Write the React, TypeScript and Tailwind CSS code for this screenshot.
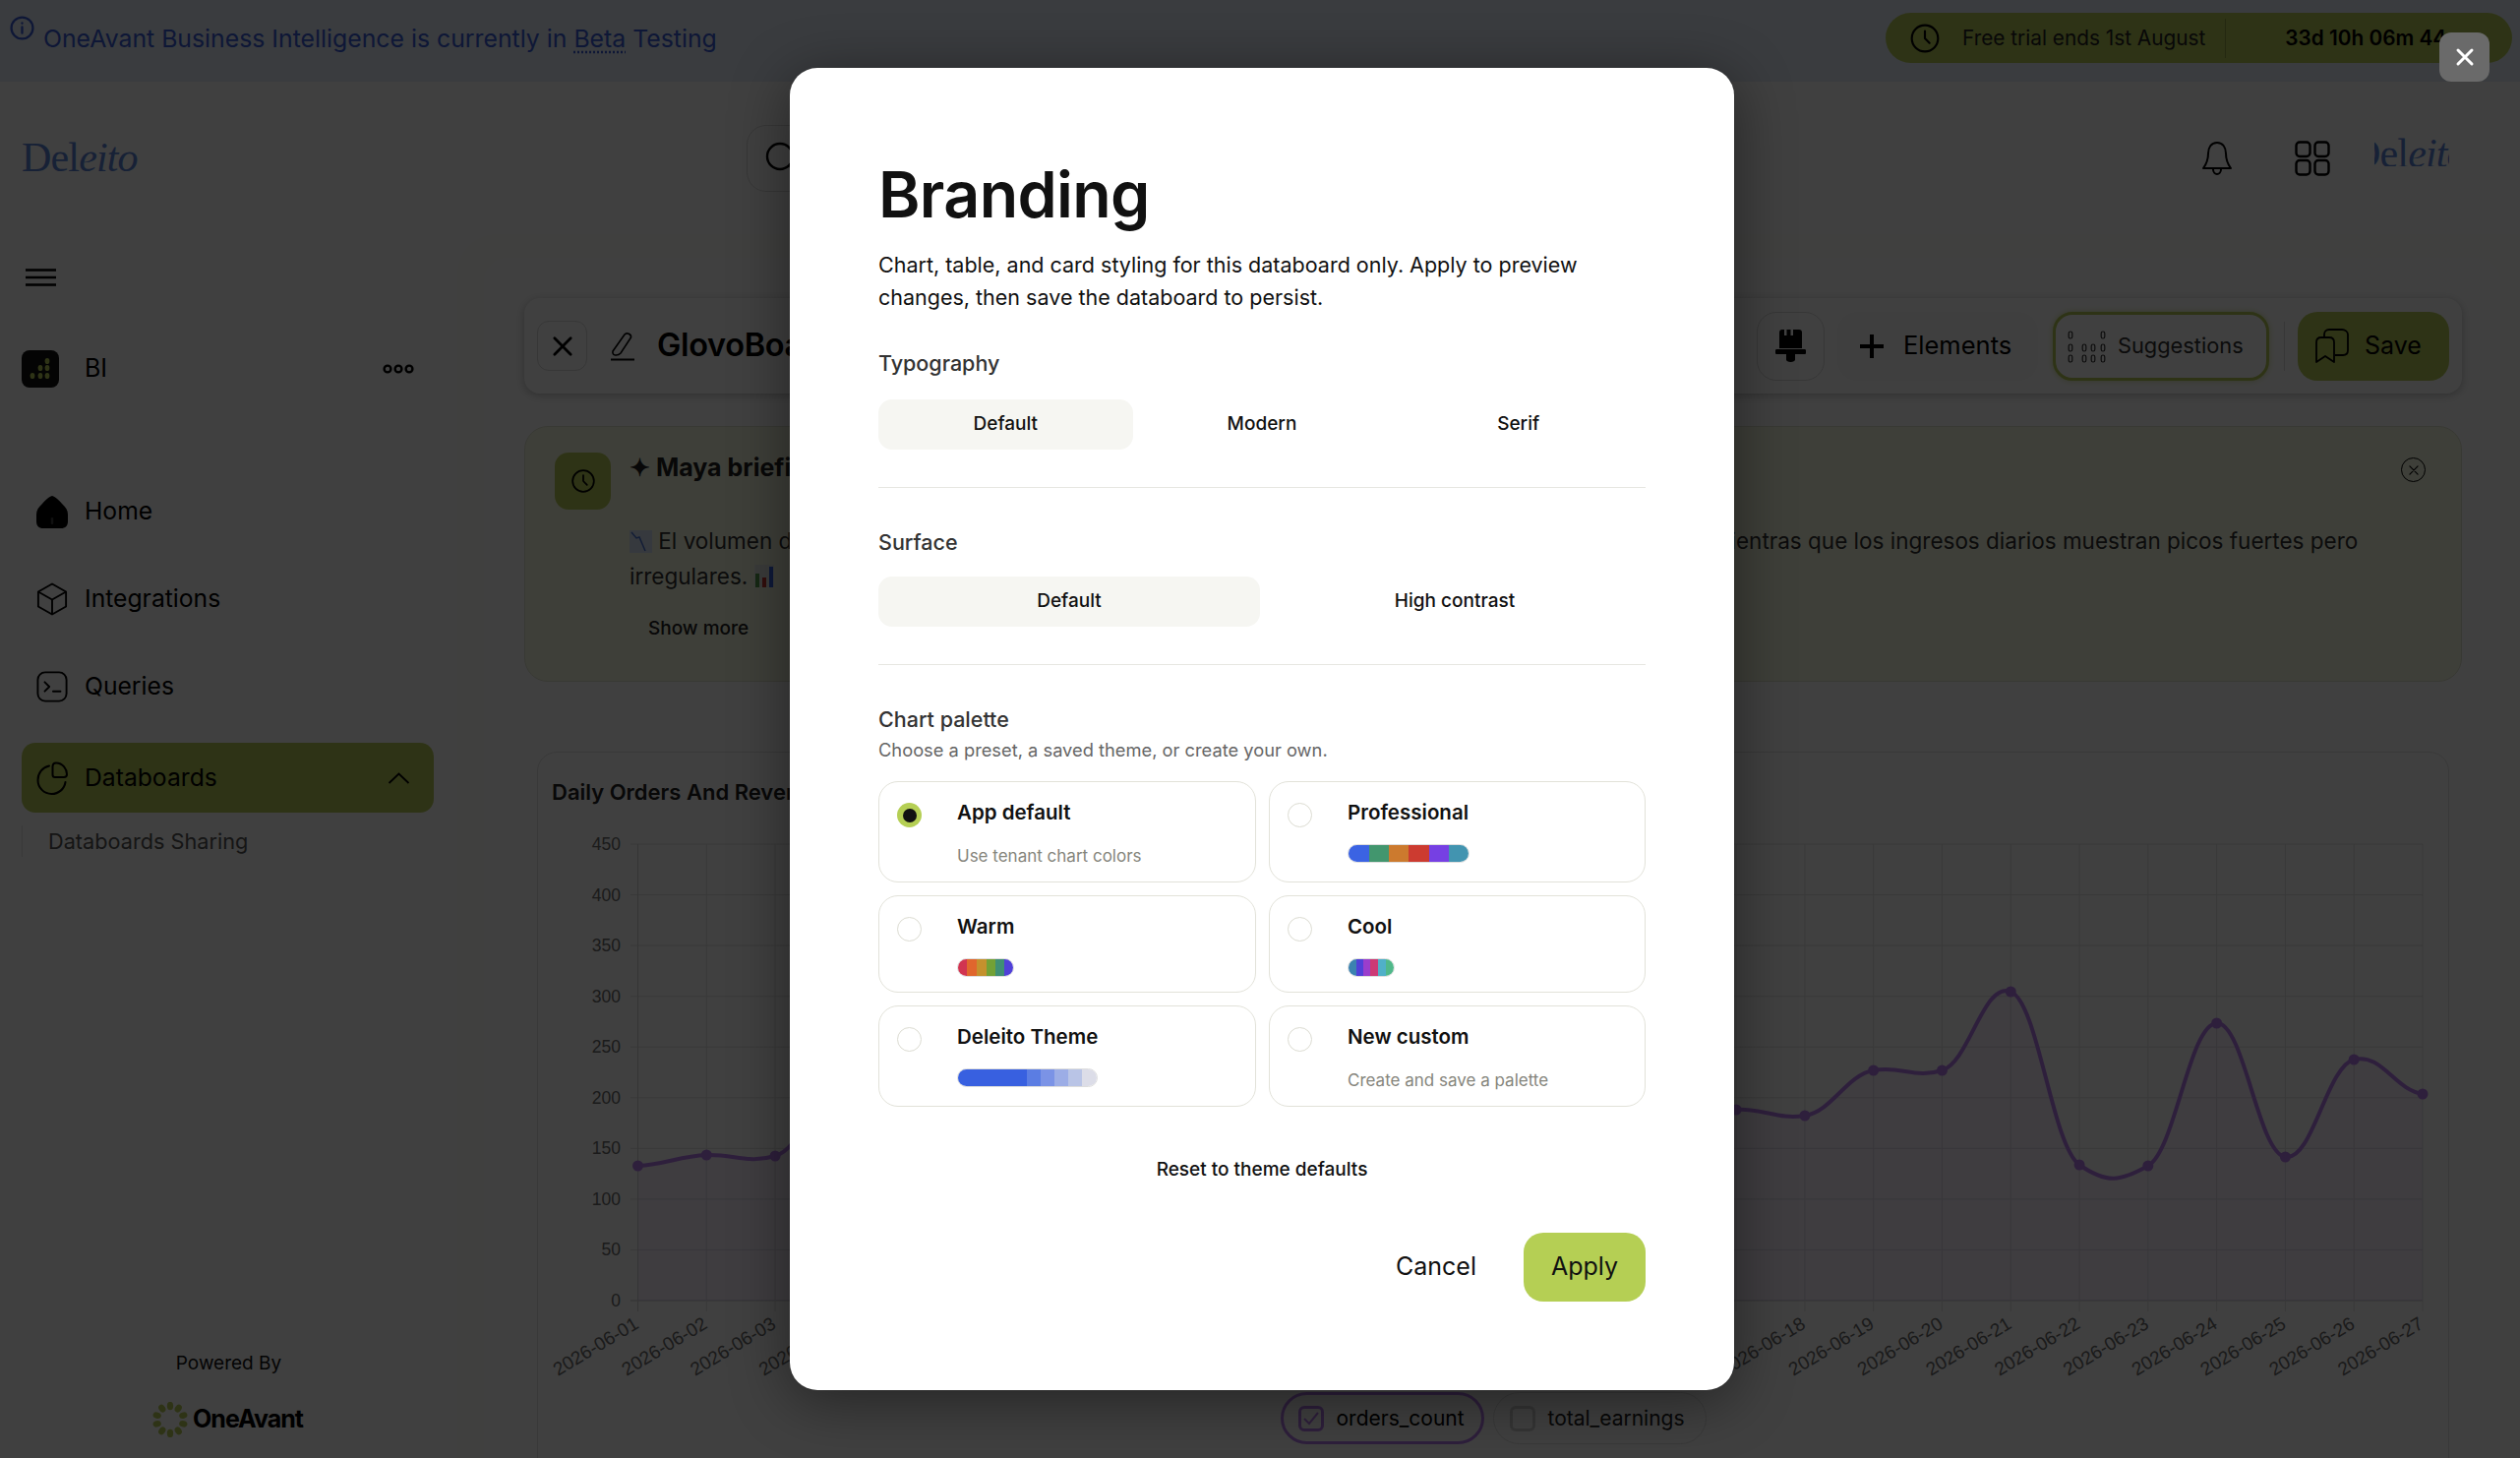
import React from "react";

const YS = [1185,1174,1175,1100,1120,1150,1130,1090,1140,1110,1160,1120,1095,1140,1125,1150,1128,1134,1088,1088,1008,1184,1185,1040,1176,1077,1112];
const X0 = 647.5;
const DX = (2462 - 647.5) / 26;
const pts = YS.map((y, i) => [X0 + i * DX, y] as const);

function smooth(): string {
  const t = 0.11;
  let d = `M${pts[0][0]} ${pts[0][1]}`;
  for (let i = 0; i < pts.length - 1; i++) {
    const p0 = pts[Math.max(0, i - 1)];
    const p1 = pts[i];
    const p2 = pts[i + 1];
    const p3 = pts[Math.min(pts.length - 1, i + 2)];
    const c1x = p1[0] + DX * 0.4;
    const c1y = p1[1] + (p2[1] - p0[1]) * t;
    const c2x = p2[0] - DX * 0.4;
    const c2y = p2[1] - (p3[1] - p1[1]) * t;
    d += ` C${c1x} ${c1y} ${c2x} ${c2y} ${p2[0]} ${p2[1]}`;
  }
  return d;
}

function Chart() {
  const line = smooth();
  const yTicks = [450, 400, 350, 300, 250, 200, 150, 100, 50, 0];
  return (
    <svg width="1944" height="570" viewBox="546 840 1944 570" className="block [font-family:'Liberation_Sans',sans-serif]">
      {yTicks.map((v, i) => {
        const y = 858 + (i * 464) / 9;
        return (
          <g key={v}>
            <line x1={640} x2={2462} y1={y} y2={y} stroke="#e2e2e2" strokeWidth={v === 0 ? 2 : 1} />
            <text x={630} y={y + 6} fontSize="17.5" textAnchor="end" fill="#6b6b6b">{v}</text>
          </g>
        );
      })}
      {pts.map((p, i) => (
        <g key={i}>
          <line x1={p[0]} x2={p[0]} y1={858} y2={1333} stroke={i === 0 ? "#d4d4d4" : "#e2e2e2"} strokeWidth={1} />
          <text transform={`translate(${p[0] + 2} 1349) rotate(-31)`} fontSize="19" textAnchor="end" fill="#6b6b6b">
            {`2026-06-${String(i + 1).padStart(2, "0")}`}
          </text>
        </g>
      ))}
      <path d={`${line} L2462 1322 L647.5 1322 Z`} fill="#c084fc" fillOpacity="0.1" />
      <path d={line} fill="none" stroke="#b87cf0" strokeWidth="4" />
      {pts.map((p, i) => <circle key={i} cx={p[0]} cy={p[1]} r="5.5" fill="#b87cf0" />)}
    </svg>
  );
}

function Logo({ className }: { className: string }) {
  return (
    <span className={`[font-family:'Liberation_Serif',serif] text-[#5b84d8] whitespace-nowrap tracking-[-0.02em] ${className}`}>
      Del<span className="italic">eito</span>
    </span>
  );
}

function Stroke({ size, children, w = 2, className = "" }: { size: number; children: React.ReactNode; w?: number; className?: string }) {
  return (
    <svg width={size} height={size} viewBox="0 0 24 24" fill="none" stroke="currentColor" strokeWidth={w} strokeLinecap="round" strokeLinejoin="round" className={`shrink-0 ${className}`}>
      {children}
    </svg>
  );
}

function Clock({ size }: { size: number }) {
  return (
    <Stroke size={size} w={1.6}>
      <circle cx="12" cy="12" r="10" />
      <path d="M12 6.5V12l3.5 3.5" />
    </Stroke>
  );
}

function XIcon({ size, w = 2.4 }: { size: number; w?: number }) {
  return <Stroke size={size} w={w}><path d="M5 5l14 14M19 5L5 19" /></Stroke>;
}

function NavItem({ icon, label }: { icon: React.ReactNode; label: string }) {
  return (
    <div className="h-[34px] flex items-center pl-[37px] gap-[17px] text-[24.700px] text-black">
      <span className="w-[32px] flex justify-center">{icon}</span>
      <span>{label}</span>
    </div>
  );
}

function BiIcon() {
  const dots = [[26, 11], [26, 18], [26, 26], [19, 18], [19, 26], [11, 26]];
  return (
    <svg width="38" height="38" viewBox="0 0 38 38">
      <rect width="38" height="38" rx="8" fill="#111" />
      {dots.map(([x, y], i) => <ellipse key={i} cx={x} cy={y} rx="2.400" ry="3.100" fill="#b8cc58" />)}
    </svg>
  );
}

function OneAvantMark() {
  const a = [0, 36, 72, 108, 144, 180, 216, 252, 288, 324];
  return (
    <svg width="36" height="36" viewBox="-18 -18 36 36">
      {a.map((d) => <ellipse key={d} cx="0" cy="-14" rx="3.200" ry="4.200" fill="#b8cc58" transform={`rotate(${d})`} />)}
    </svg>
  );
}

function Sidebar() {
  return (
    <aside className="w-[465px] shrink-0 flex flex-col pt-[35px] relative">
      <div className="pl-[26px] h-[18px]">
        <svg width="31" height="18" viewBox="0 0 31 18"><path d="M0 1.500h31M0 9h31M0 16.500h31" stroke="#000" strokeWidth="2.500" /></svg>
      </div>
      <div className="mt-[65px] pl-[22px] pr-[44px] flex items-center h-[38px]">
        <BiIcon />
        <span className="ml-[26px] text-[25px]">BI</span>
        <svg className="ml-auto" width="32" height="12" viewBox="0 0 32 12" fill="none" stroke="#000" strokeWidth="2.400">
          <circle cx="5" cy="6" r="3.400" /><circle cx="16" cy="6" r="3.400" /><circle cx="27" cy="6" r="3.400" />
        </svg>
      </div>
      <div className="mt-[109px] flex flex-col gap-[55px]">
        <NavItem label="Home" icon={
          <svg width="32" height="33" viewBox="0 0 32 33"><path d="M16 0C13 .8 10 3.500 6 8 2 12 0 14.500 0 19v7c0 4.500 2.500 7 7 7h18c4.500 0 7-2.500 7-7v-7c0-4.500-2-7-6-11C22 3.500 19 .8 16 0z" fill="#000" /><rect x="14.700" y="22" width="2.600" height="7" rx="1.300" fill="#404040" /></svg>
        } />
        <NavItem label="Integrations" icon={
          <svg width="34" height="36" viewBox="0 0 34 36" fill="none" stroke="#000" strokeWidth="2" strokeLinejoin="round"><path d="M17 1.500l15 8.500v16l-15 8.500L2 26V10z" /><path d="M2 10l15 8.500L32 10M17 18.500v16" /></svg>
        } />
        <NavItem label="Queries" icon={
          <svg width="34" height="34" viewBox="0 0 34 34" fill="none" stroke="#000" strokeWidth="2" strokeLinecap="round" strokeLinejoin="round"><rect x="1.500" y="1.500" width="31" height="31" rx="8" /><path d="M9 12l5 5-5 5M18 22h8" /></svg>
        } />
      </div>
      <div className="mt-[40px] mx-[22px] w-[419px] h-[71px] rounded-[14px] bg-[#b8cc58] flex items-center pl-[15px] pr-[24px]">
        <svg width="33" height="34" viewBox="0 0 33 34" fill="none" stroke="#000" strokeWidth="2" strokeLinecap="round" strokeLinejoin="round"><path d="M13 4.500C6 6 1.500 12 1.500 19a14 14 0 0 0 14 14c7 0 13-5 14-12" /><path d="M20 1.500c-3 0-3.500 2-3.500 4v8c0 1.500 1 2.500 2.500 2.500h9c1.500 0 3-1 3-3C31 8 27 1.500 20 1.500z" /></svg>
        <span className="ml-[16px] text-[24.700px]">Databoards</span>
        <svg className="ml-auto" width="23" height="12" viewBox="0 0 23 12" fill="none" stroke="#000" strokeWidth="1.800"><path d="M1.500 11L11.500 1.500 21.500 11" /></svg>
      </div>
      <div className="mt-[13px] ml-[22px] h-[32px] border-l border-[#e4e4e4] pl-[26px] flex items-center text-[21.700px] text-[#555]">Databoards Sharing</div>
      <div className="mt-auto pb-[21px] flex flex-col items-center">
        <span className="text-[19px] text-[#111]">Powered By</span>
        <div className="mt-[25px] flex items-center gap-[5px] h-[36px] -ml-[2px]">
          <OneAvantMark />
          <span className="text-[25px] font-bold tracking-[-0.04em]">OneAvant</span>
        </div>
      </div>
    </aside>
  );
}

function DotsIcon() {
  const cols = [4, 18, 27, 37];
  const rows = [9, 22, 33];
  return (
    <svg width="40" height="42" viewBox="0 0 40 42" fill="none" stroke="#333" strokeWidth="1.200" className="shrink-0">
      {rows.map((y, r) => cols.map((x, c) => (r === 0 && (c === 1 || c === 2)) ? null : <rect key={`${r}${c}`} x={x - 1.800} y={y - 3} width="3.600" height="7" rx="1.800" />))}
    </svg>
  );
}

function Main() {
  return (
    <main className="flex-1 min-w-0 rounded-tl-[40px] bg-[#fdfdfa] pl-[27px] pt-[24px] pr-[20px]">
      <div className="h-[1300px] rounded-t-[24px] bg-white pl-[41px] pr-[39px] pt-[41px] flex flex-col">
        <div className="h-[97px] shrink-0 rounded-[16px] bg-white shadow-[0_2px_10px_rgba(0,0,0,0.25)] flex items-center pl-[13px] pr-[13px]">
          <span className="w-[51px] h-[51px] rounded-[12px] border border-[#d9d9d9] flex items-center justify-center"><XIcon size={28} /></span>
          <svg className="ml-[23px]" width="26" height="30" viewBox="0 0 26 30" fill="none" stroke="#000" strokeWidth="1.600">
            <path d="M3 20L15 3c2-2.500 7-.5 6.500 3L11 22c-3 3-9 3-8-2z" /><path d="M1 28.500h24" strokeWidth="2" />
          </svg>
          <span className="ml-[22px] text-[32.500px] font-semibold tracking-[-0.01em]">GlovoBoard</span>
          <div className="ml-auto flex items-center h-[70px]">
            <span className="w-[69px] h-[70px] rounded-[20px] border border-[#d9d9d9] flex items-center justify-center">
              <svg width="31" height="33" viewBox="0 0 31 33"><path d="M4 3c0-2 1-3 3-3h2v6h2.500V0h4v6H18V0h6c2 0 3 1 3 3v16H4zM1.500 20h28c1 0 1.500.5 1.500 1.500v2c0 1-.5 1.500-1.500 1.500H20v5.500c0 1.500-2 2.500-4.500 2.500S11 32 11 30.500V25H1.500C.5 25 0 24.500 0 23.500v-2C0 20.500.5 20 1.500 20z" fill="#000" /></svg>
            </span>
            <span className="ml-[13px] w-[204px] h-[70px] rounded-[20px] bg-[#fbfbfb] flex items-center pl-[23px] gap-[20px] text-[25.500px]">
              <svg width="24" height="36" viewBox="0 0 24 36"><path d="M12 6v24M0 18h24" stroke="#000" strokeWidth="4" /></svg>
              Elements
            </span>
            <span className="ml-[15px] w-[220px] h-[70px] rounded-[20px] border-[3px] border-[#b8cc58] bg-white flex items-center pl-[11px] gap-[12px] text-[21.800px] text-[#333] shadow-[0_0_6px_rgba(184,204,88,0.6)]">
              <DotsIcon />
              Suggestions
            </span>
            <span className="ml-[15px] w-px h-[50px] bg-[#dcdcdc]" />
            <span className="ml-[13px] w-[154px] h-[70px] rounded-[20px] bg-[#b8cc58] flex items-center pl-[17px] gap-[16px] text-[25px]">
              <svg width="35" height="36" viewBox="0 0 35 36" fill="none" stroke="#000" strokeWidth="1.800" strokeLinejoin="round"><path d="M2 14c0-3 2-5 5-5h8c3 0 5 2 5 5v20l-9-6-9 6z" /><path d="M10 9V6c0-3 2-5 5-5h13c3 0 6 2 6 5v16c0 3-2 5-5 5h-8" /></svg>
              Save
            </span>
          </div>
        </div>
        <div className="relative mt-[33px] h-[260px] shrink-0 rounded-[24px] bg-[#f8fce4] border border-[#dfe2cd] pl-[30px] pt-[26px]">
          <div className="flex">
            <span className="w-[57px] h-[58px] rounded-[14px] bg-[#b8cc58] flex items-center justify-center"><Clock size={26} /></span>
            <div className="ml-[19px] flex-1 min-w-0 pr-[30px]">
              <div className="text-[25px] font-bold text-[#222] -mt-[3px]">✦ Maya briefing</div>
              <div className="mt-[37px] text-[22.500px] leading-[36px] text-[#333] w-[1775px]">
                <svg className="inline-block align-[-4px]" width="23" height="23" viewBox="0 0 23 23"><rect width="23" height="23" fill="#d8e2f5" /><path d="M2 2l5 6 3-1 6 14" fill="none" stroke="#4a74d8" strokeWidth="1.500" /></svg>
                {" "}El volumen de pedidos se mantiene relativamente estable durante la mayor parte de todo el periodo, mientras que los ingresos diarios muestran picos fuertes pero irregulares.{" "}
                <svg className="inline-block align-[-3px]" width="20" height="23" viewBox="0 0 20 23"><rect width="20" height="23" fill="#e6ebe6" /><rect x="1" y="9" width="4" height="14" fill="#5aa050" /><rect x="8" y="13" width="4" height="10" fill="#c83a30" /><rect x="15" y="2" width="4" height="21" fill="#3b63e3" /></svg>
              </div>
              <div className="mt-[21px] ml-[19px] text-[19px] font-medium text-[#222]">Show more</div>
            </div>
          </div>
          <span className="absolute right-[36px] top-[31px]"><span className="w-[25px] h-[25px] rounded-full border-[1.500px] border-black flex items-center justify-center"><XIcon size={14} w={2} /></span></span>
        </div>
        <div className="mt-[71px] mx-[13px] flex-1 rounded-t-[20px] border border-[#e2e2e2] flex flex-col pt-[24px]">
          <div className="pl-[14px] text-[22px] leading-[32px] font-semibold text-[#222] h-[32px]">Daily Orders And Revenue</div>
          <div className="mt-[19px]"><Chart /></div>
          <div className="mt-[5px] flex justify-center gap-[9px]">
            <span className="w-[207px] h-[53px] rounded-full border-[3px] border-[#b87cf0] flex items-center pl-[15px] gap-[13px] text-[21px]">
              <span className="w-[26px] h-[26px] rounded-[6px] border-[3px] border-[#b87cf0] flex items-center justify-center">
                <svg width="16" height="14" viewBox="0 0 16 14" fill="none" stroke="#b87cf0" strokeWidth="2"><path d="M1 7l5 5 9-11" /></svg>
              </span>
              orders_count
            </span>
            <span className="w-[217px] h-[53px] rounded-full border border-[#e2e2e2] flex items-center pl-[16px] gap-[13px] text-[21px] text-[#222]">
              <span className="w-[26px] h-[26px] rounded-[6px] border-[3px] border-[#d4d4d4]" />
              total_earnings
            </span>
          </div>
        </div>
      </div>
    </main>
  );
}

function Seg({ active, children }: { active?: boolean; children: string }) {
  return (
    <div className={`h-[51px] rounded-[14px] flex items-center justify-center text-[19px] font-medium text-[#111] ${active ? "bg-[#f6f6f2]" : ""}`}>{children}</div>
  );
}

function Stripe({ colors, widths }: { colors: string[]; widths: number[] }) {
  return (
    <div className="flex h-[19px] w-fit rounded-full overflow-hidden border border-[#ddd]">
      {colors.map((c, i) => <span key={c} className="block h-full" style={{ background: c, width: widths[i] }} />)}
    </div>
  );
}

function PaletteCard({ title, sub, stripe, selected, h }: { title: string; sub?: string; stripe?: React.ReactNode; selected?: boolean; h: string }) {
  return (
    <div className={`${h} rounded-[20px] border-[1.500px] border-[#e2e2d9] flex pl-[18px] pt-[21px]`}>
      {selected ? (
        <span className="w-[25px] h-[25px] rounded-full bg-[#b5cf54] flex items-center justify-center shrink-0"><span className="w-[14px] h-[14px] rounded-full bg-[#111]" /></span>
      ) : (
        <span className="w-[25px] h-[25px] rounded-full border border-[#dcdcd2] shrink-0" />
      )}
      <div className="ml-[36px] -mt-[4px]">
        <div className="text-[20.500px] leading-[28px] font-semibold text-[#111]">{title}</div>
        {sub && <div className="mt-[18px] text-[17px] leading-[24px] text-[#85857c]">{sub}</div>}
        {stripe && <div className="mt-[18px]">{stripe}</div>}
      </div>
    </div>
  );
}

function Modal() {
  return (
    <div className="w-[960px] h-[1344px] rounded-[28px] bg-white shadow-[0_10px_60px_rgba(0,0,0,0.45)] px-[90px] pt-[94px]">
      <h1 className="text-[64.500px] leading-[70px] font-semibold text-[#111] tracking-[-0.01em]">Branding</h1>
      <p className="mt-[20px] text-[21.500px] leading-[32.600px] text-[#111]">Chart, table, and card styling for this databoard only. Apply to preview changes, then save the databoard to persist.</p>
      <div className="mt-[36px] text-[21.500px] leading-[30px] font-medium text-[#333]">Typography</div>
      <div className="mt-[22px] grid grid-cols-3 gap-[2px]">
        <Seg active>Default</Seg><Seg>Modern</Seg><Seg>Serif</Seg>
      </div>
      <div className="mt-[38px] h-px bg-[#e6e6e1]" />
      <div className="mt-[40px] text-[21.500px] leading-[30px] font-medium text-[#333]">Surface</div>
      <div className="mt-[20px] grid grid-cols-2 gap-[4px]">
        <Seg active>Default</Seg><Seg>High contrast</Seg>
      </div>
      <div className="mt-[38px] h-px bg-[#e6e6e1]" />
      <div className="mt-[40px] text-[21.500px] leading-[30px] font-medium text-[#333]">Chart palette</div>
      <div className="mt-[3px] text-[18.300px] leading-[26px] text-[#666]">Choose a preset, a saved theme, or create your own.</div>
      <div className="mt-[19px] grid grid-cols-[384px_383px] gap-[13px]">
        <PaletteCard h="h-[103px]" selected title="App default" sub="Use tenant chart colors" />
        <PaletteCard h="h-[103px]" title="Professional" stripe={<Stripe colors={["#3b63e3", "#42966e", "#cc7a2e", "#cc3b30", "#7640e3", "#4294b0"]} widths={[21, 20, 20, 21, 20, 20]} />} />
        <PaletteCard h="h-[99px]" title="Warm" stripe={<Stripe colors={["#d13450", "#e0662d", "#c4912d", "#72a135", "#3f8f74", "#5040d8"]} widths={[9, 10, 10, 9, 9, 9]} />} />
        <PaletteCard h="h-[99px]" title="Cool" stripe={<Stripe colors={["#3b82b0", "#5040d8", "#9a3dcc", "#cc3a75", "#50b0c8", "#50b88a"]} widths={[8, 7, 7, 8, 8, 8]} />} />
        <PaletteCard h="h-[103px]" title="Deleito Theme" stripe={<Stripe colors={["#3860e0", "#5b7de3", "#7b93e6", "#9cade6", "#b9c4e6", "#dcdde8"]} widths={[70, 14, 14, 14, 14, 15]} />} />
        <PaletteCard h="h-[103px]" title="New custom" sub="Create and save a palette" />
      </div>
      <div className="mt-[51px] text-center text-[19px] leading-[26px] font-medium text-[#111]">Reset to theme defaults</div>
      <div className="mt-[51px] flex justify-end items-center">
        <span className="text-[25px] text-[#111]">Cancel</span>
        <span className="ml-[48px] w-[124px] h-[70px] rounded-[20px] bg-[#b5cf54] flex items-center justify-center text-[25px] text-[#111]">Apply</span>
      </div>
    </div>
  );
}

export default function App() {
  return (
    <div className="relative w-[2562px] h-[1482px] overflow-hidden bg-white text-black [font-family:Inter,sans-serif]">
      <div className="h-[83px] bg-[#e5f0fc] flex items-start pl-[10px] pr-[8px]">
        <svg className="mt-[16px] text-[#3b5bd8]" width="25" height="25" viewBox="0 0 24 24" fill="none" stroke="currentColor" strokeWidth="2.200" strokeLinecap="round"><circle cx="12" cy="12" r="10.500" /><path d="M12 11v6M12 7v.5" /></svg>
        <span className="mt-[23px] ml-[9px] text-[24.800px] leading-[32px] text-[#3b5bd8]">OneAvant Business Intelligence is currently in <span className="underline decoration-dotted underline-offset-[4px]">Beta</span> Testing</span>
        <div className="ml-auto mt-[13px] h-[51px] w-[637px] rounded-full bg-[#b8cc58] flex items-center pl-[24px] text-[20.800px] text-black">
          <Clock size={32} />
          <span className="ml-[22px] text-[#222]">Free trial ends 1st August</span>
          <span className="ml-[20px] w-px h-[40px] bg-[#8f9f46]" />
          <span className="ml-[60px] font-semibold">33d 10h 06m 44s</span>
        </div>
      </div>
      <div className="h-[155px] flex items-center pl-[22px]">
        <Logo className="text-[42px] w-[737px] inline-block" />
        <div className="w-[900px] h-[68px] rounded-[20px] border border-[#dcdcdc] flex items-center pl-[18px] text-black">
          <svg width="34" height="34" viewBox="0 0 34 34" fill="none" stroke="#000" strokeWidth="2.400"><circle cx="15" cy="15" r="13" /><path d="M25 25l7 7" /></svg>
        </div>
        <svg className="ml-[580px]" width="30" height="36" viewBox="0 0 30 36" fill="none" stroke="#000" strokeWidth="2"><path d="M15 2c-6 0-9 5-9 11 0 7-2 11-5 15h28c-3-4-5-8-5-15 0-6-3-11-9-11z" strokeLinejoin="round" /><path d="M11 29c0 3 2 5 4 5s4-2 4-5" /></svg>
        <svg className="ml-[64px]" width="36" height="36" viewBox="0 0 36 36" fill="none" stroke="#000" strokeWidth="2.400">
          <rect x="1.500" y="1.500" width="14" height="14.500" rx="3.500" /><rect x="20.500" y="1.500" width="14" height="14.500" rx="3.500" /><rect x="1.500" y="20" width="14" height="14.500" rx="3.500" /><rect x="20.500" y="20" width="14" height="14.500" rx="3.500" />
        </svg>
        <div className="ml-[45px] w-[76px] h-[44px] overflow-hidden mb-[27px]">
          <Logo className="text-[42px] block -ml-[24px]" />
        </div>
      </div>
      <div className="flex h-[1244px]">
        <Sidebar />
        <Main />
      </div>
      <div className="absolute inset-0 bg-black/75" />
      <div className="absolute inset-0 flex items-start justify-start pl-[803px] pt-[69px]">
        <Modal />
      </div>
      <span className="absolute left-[2480px] top-[33px] w-[51px] h-[50px] rounded-[12px] bg-[#6a6a6a] flex items-center justify-center text-white"><XIcon size={24} w={3} /></span>
    </div>
  );
}
